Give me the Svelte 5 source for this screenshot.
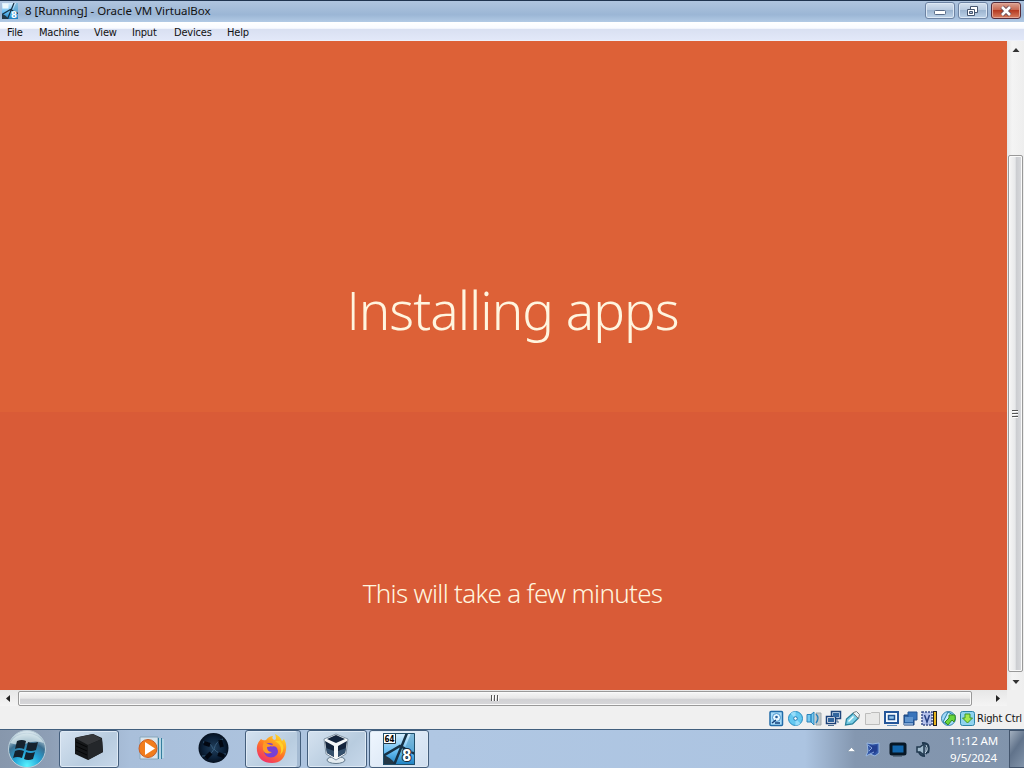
<script lang="ts">
  interface Entry {
    label: string;
    width: number;
  }

  const menus: Entry[] = [
    { label: "File", width: 32 },
    { label: "Machine", width: 55 },
    { label: "View", width: 38 },
    { label: "Input", width: 42 },
    { label: "Devices", width: 53 },
    { label: "Help", width: 40 },
  ];

  const indicators = [
    "disk", "cd", "audio", "network", "usb", "folder",
    "display", "record", "cpu", "mouse", "keyboard",
  ];
</script>

{#snippet vmIcon()}
  <defs>
    <linearGradient id="sky" x1="0" y1="0" x2="0" y2="1">
      <stop offset="0" stop-color="#d9efff" />
      <stop offset=".6" stop-color="#62baf0" />
      <stop offset="1" stop-color="#1c7fc0" />
    </linearGradient>
  </defs>
  <rect width="32" height="32" fill="url(#sky)" />
  <path d="M0 22q8 2 13 10H0Z" fill="#233746" />
  <path d="M24 0 11 32M0 23 17 13 32 21" fill="none" stroke="#173145" stroke-width="2.5" />
  <path d="M28 0h4v18l-5 2-5-5Z" fill="#4d9ac4" opacity=".6" />
{/snippet}

<div class="desktop">
  <header class="titlebar">
    <svg class="app-icon" viewBox="0 0 32 32">
      {@render vmIcon()}
      <path d="M1 1h12v10H1Z" fill="#edf8fc" />
      <text x="18" y="30" font-size="19" font-weight="700" fill="#fff">8</text>
    </svg>
    <span class="title">8 [Running] - Oracle VM VirtualBox</span>
    <div class="window-buttons">
      <button aria-label="Minimize">
        <svg width="30" height="16"><rect x="9.5" y="7.5" width="11" height="4" rx="1" fill="#fff" stroke="#576a87" /></svg>
      </button>
      <button aria-label="Restore">
        <svg width="30" height="16">
          <path d="M12.5 3.5h7v6h-7Z" fill="#fff" stroke="#46566f" />
          <path d="M9.5 6.5h7v6h-7Z" fill="#fff" stroke="#46566f" />
          <path d="M11.5 8.5h3v2h-3Z" fill="#a9bdd8" stroke="#46566f" />
        </svg>
      </button>
      <button class="close" aria-label="Close">
        <svg width="30" height="16">
          <path d="m11 4 8 8m0-8-8 8" stroke="#664c55" stroke-width="4.5" />
          <path d="m11 4 8 8m0-8-8 8" stroke="#fff" stroke-width="2.6" />
        </svg>
      </button>
    </div>
  </header>

  <nav class="menubar">
    {#each menus as menu}
      <span style:width="{menu.width}px">{menu.label}</span>
    {/each}
  </nav>

  <div class="workspace">
    <main class="guest">
      <h1><span class="capital">I</span>nstalling apps</h1>
      <p>This will take a few minutes</p>
    </main>
    <div class="vscroll">
      <svg class="up" width="17" height="17"><path d="m5.5 11 3.5-4 3.5 4Z" fill="#333" /></svg>
      <div class="vthumb">
        <svg width="9" height="10"><path d="M1 1.5h6M1 4.5h6M1 7.5h6" stroke="#555" /><path d="M2 2.5h5M2 5.5h5M2 8.5h5" stroke="#fff" /></svg>
      </div>
      <svg class="down" width="17" height="17"><path d="M5.5 7h7L9 11Z" fill="#333" /></svg>
    </div>
  </div>

  <div class="hscroll">
    <svg width="18" height="16"><path d="M10 5v7L6 8.500Z" fill="#222" /></svg>
    <div class="hthumb">
      <svg width="10" height="8"><path d="M1.500 0v6M4.500 0v6M7.500 0v6" stroke="#555" /><path d="M2.500 1v5M5.500 1v5M8.500 1v5" stroke="#fff" /></svg>
    </div>
    <svg class="right" width="18" height="16"><path d="M7 5v7l4-3.500Z" fill="#222" /></svg>
  </div>

  <footer class="statusbar">
    <div class="indicators">
      {#each indicators as kind}
        <svg width="17" height="17" viewBox="0 0 17 17">
          {#if kind === "disk"}
            <rect x="2" y="1.500" width="12.500" height="14" rx="1" fill="#a9dcfa" stroke="#216ba8" stroke-width="1.500" />
            <circle cx="8.500" cy="7.500" r="4" fill="#e9f8ff" stroke="#4a94cc" />
            <circle cx="8.500" cy="7" r="1.300" fill="#225b99" />
            <path d="m4 13 4-3m-1 3h5" fill="none" stroke="#163f78" stroke-width="1.500" />
          {:else if kind === "cd"}
            <circle cx="8.500" cy="8.500" r="7" fill="#64c8f0" stroke="#278abf" />
            <path d="m8.500 8.500-5-5a7 7 0 0 1 5-2Zm0 0 5 5a7 7 0 0 1-5 2Z" fill="#a4e2fc" opacity=".8" />
            <circle cx="8.500" cy="8.500" r="1.800" fill="#fff" stroke="#2779b0" />
          {:else if kind === "audio"}
            <path d="M10 3h5v12h-5Z" fill="#c3c9cb" stroke="#a1a9ac" />
            <path d="M1 4.500h4L8 2v13l-3-3H1Z" fill="#76c9f0" stroke="#2c82b8" />
            <path d="M5 4v8m5-8q4 4 0 9" fill="none" stroke="#2681bc" stroke-width="1.300" />
          {:else if kind === "network"}
            <rect x="6.500" y="1.500" width="9" height="7" fill="#cfe4f7" stroke="#21477b" stroke-width="1.500" />
            <rect x="1.500" y="6.500" width="9" height="7" fill="#fff" stroke="#193f77" stroke-width="1.500" />
            <path d="M3 8h6v4H3Zm5-5h6v4H8Z" fill="#32659d" />
            <path d="M3 15.500h6M12 9v3h2" stroke="#4a6b8e" fill="none" />
          {:else if kind === "usb"}
            <path d="m1.500 15 1-6 7-6 5 5-6 6Z" fill="#79cde5" stroke="#277f9b" stroke-width="1.300" />
            <path d="m9.500 2.500 3-1 3 3-1 4-5-5Z" fill="#e9f1f2" stroke="#777f82" />
            <path d="m4.500 11.500 5-5" stroke="#f4ffff" stroke-width="1.500" />
          {:else if kind === "folder"}
            <path d="M1.500 3.500h5l1-1h8v12h-14Z" fill="#e8e8e7" stroke="#bdbdbc" />
          {:else if kind === "display"}
            <rect x="2" y="2" width="13" height="11" fill="#f4faff" stroke="#24569a" stroke-width="2" />
            <rect x="5.500" y="5.500" width="6" height="4" fill="#90c2eb" stroke="#1f5293" stroke-width="1.500" />
            <path d="M4 15.500h10" stroke="#6591bb" />
          {:else if kind === "record"}
            <path d="M2 5h10v10H2Z" fill="#2d65a7" stroke="#173e78" />
            <path d="M6 2h9v8H6Z" fill="#3974bb" stroke="#245494" />
            <path d="M3 7h8v5H3Z" fill="#6094ce" />
            <path d="M2 14h9" stroke="#d6eaff" />
          {:else if kind === "cpu"}
            <rect x="1" y="2" width="10" height="13" fill="#b5c1eb" stroke="#3b4f8a" stroke-width="1.500" stroke-dasharray="2 1" />
            <path d="m3.500 5 2.500 7 2.500-7" fill="none" stroke="#263f83" stroke-width="1.500" />
            <rect x="12.500" y="1.500" width="3" height="14" fill="#e6b31c" stroke="#222" />
          {:else if kind === "mouse"}
            <circle cx="8.500" cy="8.500" r="7" fill="#a2dafa" stroke="#3583ae" />
            <path d="M3 12 8 2l5 3-6 9Z" fill="#c5effc" stroke="#247aa4" />
            <path d="M9 5h6q1 4-1 7l-2-2-4 5-3-3 4-4Z" fill="#6ad63c" stroke="#368923" />
          {:else}
            <rect x="1.500" y="1.500" width="14" height="14" rx="2" fill="#8fd3ef" stroke="#2c83a7" />
            <path d="M6 4h5v4h2.500l-5 5-5-5H6Z" fill="#a5e94e" stroke="#3d952b" />
          {/if}
        </svg>
      {/each}
    </div>
    <span>Right Ctrl</span>
  </footer>

  <div class="taskbar">
    <div class="start">
      <svg width="40" height="39" viewBox="0 0 40 39">
        <defs>
          <radialGradient id="orb" cx=".5" cy=".95" r=".9">
            <stop offset="0" stop-color="#58f4ff" />
            <stop offset=".4" stop-color="#23a3d6" />
            <stop offset=".7" stop-color="#3b6e90" />
            <stop offset="1" stop-color="#d3e2ea" />
          </radialGradient>
        </defs>
        <circle cx="20" cy="19" r="18.500" fill="url(#orb)" stroke="#b9ced9" />
        <path d="M3 13a18 14 0 0 1 34 0q-8-3-16 0T3 13Z" fill="#e1eef1" opacity=".65" />
        <path d="M10 11q5-2 9 0l-2 8q-5-2-9 0Zm11 1q5 2 10 0l-2 8q-5 2-10 0ZM8 21q4-2 9 0l-2 7q-5-2-9 0Zm11 1q5 2 9 0l-2 7q-5 2-9 0Z" fill="#15222e" />
      </svg>
    </div>
    <div class="task active first">
      <svg width="34" height="34" viewBox="0 0 34 34">
        <path d="m3 6 3-1 15-3 9 4 1 14-15 8L3 22Z" fill="#151719" />
        <path d="m3 6 18-4 9 5-14 6Z" fill="#36383b" />
        <path d="m16 13 14-6 1 13-15 8Z" fill="#24272a" />
        <path d="m4 10 11 5M4 14l11 5M4 18l11 5" stroke="#050607" />
      </svg>
    </div>
    <div class="task media">
      <svg width="30" height="28" viewBox="0 0 30 28">
        <path d="M4 2h18v22H4Z" fill="#d8e4ec" stroke="#87a7bd" />
        <path d="M22.500 3v21M25.500 3v21" stroke="#347f9e" /><path d="M24 3v21M27 4v19" stroke="#c2e9f0" />
        <circle cx="12" cy="13.500" r="9" fill="#f17d1c" stroke="#c95e25" />
        <path d="m9 7 10 6.500L9 20Z" fill="#fff" />
      </svg>
    </div>
    <div class="task globe">
      <svg width="32" height="32" viewBox="0 0 32 32">
        <defs><radialGradient id="globe"><stop stop-color="#213f5c" /><stop offset=".7" stop-color="#0b2038" /><stop offset="1" stop-color="#05101f" /></radialGradient></defs>
        <circle cx="15.500" cy="15" r="15" fill="url(#globe)" />
        <path d="M5 9q8 0 10 7M25 6q-7 2-9 10M4 23q8 1 12-7m12 5q-7 1-12-5" stroke="#385d7d" fill="none" />
        <path d="m6 10 6 2m10-5 2 7M8 25l5-5m7 1 6 2" stroke="#020711" stroke-width="4" />
      </svg>
    </div>
    <div class="task active firefox">
      <svg width="32" height="32" viewBox="0 0 32 32">
        <defs>
          <linearGradient id="flame" x1=".8" y1="0" x2=".2" y2="1">
            <stop stop-color="#ffe226" /><stop offset=".5" stop-color="#ff7a22" /><stop offset="1" stop-color="#f02871" />
          </linearGradient>
        </defs>
        <path d="M5 6q2 2 5 1 3-4 7-4-2 3 2 4 2-1 0-6 5 2 7 7l2-2q3 5 2 11-2 13-14 13Q3 30 1 18 0 11 5 6Z" fill="url(#flame)" />
        <path d="M10 11q3-2 7 0l-2 3q4-2 6 1 3 6-3 9-8 2-10-5-1-5 2-8Z" fill="#7940d4" />
        <path d="M8 8q3 4 9 4-3 2-6 2 0 5 5 5-6 4-9-2-1-4 1-9Z" fill="#ff9b22" />
        <path d="M19 8q9 5 5 14 7-7 0-14" fill="#ffd027" />
      </svg>
    </div>
    <div class="task active vbox">
      <svg width="32" height="34" viewBox="0 0 32 34">
        <ellipse cx="16" cy="28" rx="9" ry="3.500" fill="#e3ebf0" stroke="#62788b" />
        <path d="m16 2 12 5-2 15-10 6-10-6L4 7Z" fill="#f4f7f9" stroke="#8194a6" />
        <path d="m16 3 9 4-9 4-9-4ZM5 9l9 5v11l-7-4Zm22 0-9 5v11l7-4Z" fill="#14253d" />
        <path d="m6 16 8 3v6l-7-4Zm12 3 8-3-1 5-7 4Z" fill="#34506c" />
      </svg>
    </div>
    <div class="task active vm">
      <svg width="32" height="32" viewBox="0 0 32 32">
        {@render vmIcon()}
        <path d="M.500.500h12v10H.500Z" fill="#fff" stroke="#283741" />
        <text x="1.500" y="8.500" font-size="8" font-weight="700">64</text>
        <text x="19" y="28" font-size="15" font-weight="700" fill="#fff" stroke="#182938" stroke-width="2" paint-order="stroke">8</text>
        <path d="M.500.500h31v31H.500Z" fill="none" stroke="#1f4d69" />
      </svg>
    </div>
    <div class="tray">
      <svg width="9" height="7"><path d="m.500 5.500 4-4 4 4Z" fill="#fff" stroke="#6f859b" stroke-width=".5" /></svg>
      <svg width="17" height="18" viewBox="0 0 17 18">
        <path d="M3 3q5 2 12 0v10l-4 3-5-2-4 2 2-5Z" fill="#3156a6" stroke="#98b6df" />
        <path d="M6 5q4 1 7 0v6l-3 3-4-2Z" fill="#233f91" /><path d="m4 5 4 3-3 3m1 3 4-2" stroke="#86a5dd" fill="none" />
      </svg>
      <svg width="18" height="15"><rect x="2" y="2" width="14" height="10" rx="1" fill="#1266ac" stroke="#071725" stroke-width="3" /><path d="M4 14h9" stroke="#334455" /></svg>
      <svg width="16" height="17" viewBox="0 0 16 17">
        <path d="M2 6h3l4-3v11l-4-3H2Z" fill="#9eb8cb" stroke="#20394f" stroke-width="1.500" />
        <path d="M10 4q5 4 1 9M7 2q9-1 6 10M4 11q1 4 6 4" fill="none" stroke="#203950" stroke-width="2" />
        <path d="M11 4q3 5-1 8" fill="none" stroke="#c8dce8" />
      </svg>
    </div>
    <div class="clock"><span>11:12 AM</span><span>9/5/2024</span></div>
    <div class="show-desktop"></div>
  </div>
</div>

<style>
  :global(body) {
    overflow: hidden;
  }

  .desktop {
    width: 1024px;
    height: 768px;
    display: flex;
    flex-direction: column;
    overflow: hidden;
    background: #f0f0f0;
    color: #111;
    font-family: "DejaVu Sans Condensed", "Liberation Sans", sans-serif;
    font-size: 11px;
  }

  .desktop *,
  .desktop {
    box-sizing: border-box;
  }

  svg {
    display: block;
    flex-shrink: 0;
  }

  .titlebar {
    height: 22px;
    display: flex;
    align-items: center;
    padding-left: 2px;
    border-top: 1px solid #20344f;
    background: linear-gradient(#b0c5df, #9bb6d5 65%, #b2cae5);
    flex-shrink: 0;
  }

  .app-icon {
    width: 16px;
    height: 16px;
    margin-bottom: 2px;
  }

  .title {
    margin: 0 0 2px 7px;
    white-space: nowrap;
    font-family: "Noto Sans", sans-serif;
    font-size: 11.5px;
    letter-spacing: -0.02px;
  }

  .window-buttons {
    display: flex;
    gap: 3px;
    margin: 0 3px 2px auto;
  }

  button {
    width: 30px;
    height: 17px;
    padding: 0;
    border: 1px solid #6d83a3;
    border-radius: 3px;
    background: linear-gradient(#d5e1ef, #b6c9df 48%, #9db5d0 50%, #bdd2e8);
    box-shadow: inset 0 0 0 1px #dce8f5;
  }

  button svg {
    margin-left: -1px;
  }

  .close {
    border-color: #552c3a;
    background: linear-gradient(#dba393, #c7654e 48%, #b63b22 50%, #d77e60);
    box-shadow: inset 0 0 0 1px #e3a798;
  }

  .menubar {
    height: 19px;
    display: flex;
    align-items: center;
    padding: 2px 0 0 7px;
    background: linear-gradient(#fff, #f8faff 35%, #d9e0f2 40%, #e2e8f8);
    border-bottom: 1px solid #edf0fa;
    letter-spacing: -0.2px;
    flex-shrink: 0;
  }

  .workspace {
    height: 649px;
    display: flex;
    flex-shrink: 0;
  }

  .guest {
    width: 1007px;
    display: flex;
    flex-direction: column;
    align-items: center;
    padding: 229px 0 0 18px;
    background: linear-gradient(#dd6137 0 371px, #d95b37 371px);
    color: #fff5df;
    font-family: "Noto Sans", "Open Sans", sans-serif;
    font-weight: 300;
  }

  h1 {
    margin: 0;
    height: 80px;
    font-size: 53px;
    font-weight: 300;
    line-height: 80px;
    letter-spacing: -1px;
    white-space: nowrap;
  }

  .capital {
    font-family: "Open Sans", sans-serif;
  }

  p {
    margin: 223px 0 0;
    font-size: 26px;
    line-height: 40px;
    letter-spacing: -0.7px;
    white-space: nowrap;
  }

  .vscroll {
    width: 17px;
    display: flex;
    flex-direction: column;
    background: linear-gradient(90deg, #e6e6e6, #f4f4f4 30%, #eee);
  }

  .vthumb {
    width: 15px;
    height: 517px;
    display: grid;
    place-items: center;
    margin: 97px 0 0 1px;
    border: 1px solid #999;
    border-radius: 2px;
    background: linear-gradient(90deg, #f6f6f6, #e7e8ea 48%, #cbcdd1 55%, #d9dadd);
    box-shadow: inset 0 0 0 1px #fafafa;
  }

  .down {
    margin-top: auto;
  }

  .hscroll {
    height: 16px;
    display: flex;
    width: 1007px;
    background: linear-gradient(#e7e7e7, #f4f4f4);
    flex-shrink: 0;
  }

  .hthumb {
    width: 954px;
    height: 15px;
    margin-top: 1px;
    display: grid;
    place-items: center;
    border: 1px solid #999;
    border-radius: 2px;
    background: linear-gradient(#f6f6f6, #e8e8e8 48%, #d1d1d4 55%, #d8d8da);
    box-shadow: inset 0 0 0 1px #fafafa;
  }

  .right {
    margin-left: auto;
  }

  .statusbar {
    height: 23px;
    display: flex;
    align-items: center;
    justify-content: flex-end;
    gap: 1px;
    padding: 1px 1px 0 0;
    background: #f0f0f0;
    white-space: nowrap;
    flex-shrink: 0;
  }

  .statusbar span {
    width: 46px;
    letter-spacing: -0.2px;
  }

  .indicators {
    display: flex;
    gap: 2.1px;
  }

  .taskbar {
    height: 39px;
    display: flex;
    align-items: center;
    border-top: 1px solid #415f7e;
    background: linear-gradient(90deg, #8797ac 0, #8e9fb6 50px, #a9bfda 130px, #b0c7e3 430px, #acc4e1 805px, #8497b0 855px, #8194ac);
    flex-shrink: 0;
  }

  .start {
    width: 59px;
    padding-left: 7px;
  }

  .task {
    height: 38px;
    display: grid;
    place-items: center;
  }

  .active {
    border: 1px solid #445e7c;
    border-radius: 3px;
    background: linear-gradient(135deg, #d5e2f0, #b8ccdf 60%, #c7d8ea);
    box-shadow: inset 0 0 0 1px #dfeaf5;
  }

  .first,
  .vbox,
  .vm {
    width: 60px;
  }

  .media,
  .globe {
    width: 63px;
  }

  .firefox {
    width: 56px;
    padding-right: 2px;
    box-shadow: inset -3px 0 #a4bad2, inset 0 0 0 1px #dfeaf5;
  }

  .vbox {
    margin-left: 6px;
    padding-right: 3px;
  }

  .vm {
    margin-left: 2px;
    background: linear-gradient(135deg, #eff6ff, #cfdeef);
  }

  .tray {
    width: 84px;
    display: flex;
    align-items: center;
    justify-content: space-between;
    margin: 0 -1px 0 auto;
  }

  .clock {
    width: 79px;
    display: flex;
    flex-direction: column;
    align-items: center;
    padding: 0 0 0 8px;
    color: #fff;
    font-family: "Noto Sans", sans-serif;
    font-size: 11.5px;
    line-height: 17px;
    letter-spacing: -0.15px;
    white-space: nowrap;
  }

  .show-desktop {
    width: 15px;
    height: 38px;
    border: 1px solid #42546c;
    border-right: 0;
    background: linear-gradient(125deg, #a2afbf, #61738b 45%, #8294aa);
  }
</style>
